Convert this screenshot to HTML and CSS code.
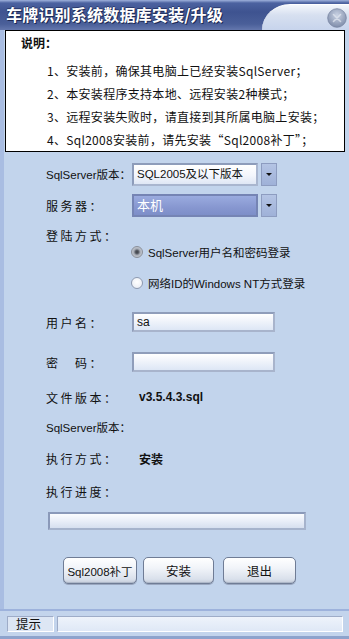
FILE: index.html
```html
<!DOCTYPE html>
<html lang="zh-CN">
<head>
<meta charset="utf-8">
<title>车牌识别系统数据库安装/升级</title>
<link rel="stylesheet" href="styles.css">
</head>
<body>
<div class="window">
  <div class="titlebar">
    <span class="title">车牌识别系统数据库安装/升级</span>
    <svg class="close" width="20" height="20" viewBox="0 0 20 20">
      <defs>
        <radialGradient id="cg" cx="50%" cy="35%" r="65%">
          <stop offset="0" stop-color="#c9d2e3"/>
          <stop offset="1" stop-color="#7f8daa"/>
        </radialGradient>
      </defs>
      <circle cx="10" cy="10" r="9.3" fill="url(#cg)" stroke="#7a87a3" stroke-width="0.8"/>
      <path d="M6.5 6.5 L13.5 13.5 M13.5 6.5 L6.5 13.5" stroke="#e4e9f2" stroke-width="1.6" stroke-linecap="round" opacity="0.7"/>
    </svg>
  </div>
  <div class="main">
    <div class="notes">
      <div class="notes-title">说明：</div>
      <p>1、安装前，确保其电脑上已经安装SqlServer；</p>
      <p>2、本安装程序支持本地、远程安装2种模式；</p>
      <p>3、远程安装失败时，请直接到其所属电脑上安装；</p>
      <p>4、Sql2008安装前，请先安装“Sql2008补丁”；</p>
    </div>
    <div class="form">
      <div class="row row-combo1">
        <span class="label latin">SqlServer版本：</span>
        <div class="combo">
          <div class="combo-field">SQL2005及以下版本</div>
          <div class="combo-btn"><span class="arrow"></span></div>
        </div>
      </div>
      <div class="row row-combo2">
        <span class="label">服务器：</span>
        <div class="combo">
          <div class="combo-field selected">本机</div>
          <div class="combo-btn"><span class="arrow"></span></div>
        </div>
      </div>
      <div class="row row-login">
        <span class="label">登陆方式：</span>
      </div>
      <div class="row row-radio1">
        <span class="radio checked"></span><span class="radio-text">SqlServer用户名和密码登录</span>
      </div>
      <div class="row row-radio2">
        <span class="radio"></span><span class="radio-text">网络ID的Windows NT方式登录</span>
      </div>
      <div class="row row-user">
        <span class="label">用户名：</span>
        <div class="input">sa</div>
      </div>
      <div class="row row-pwd">
        <span class="label">密　码：</span>
        <div class="input"></div>
      </div>
      <div class="row row-file">
        <span class="label">文件版本：</span>
        <span class="value latin-bold">v3.5.4.3.sql</span>
      </div>
      <div class="row row-sqlver">
        <span class="label latin">SqlServer版本：</span>
      </div>
      <div class="row row-exec">
        <span class="label">执行方式：</span>
        <span class="value bold">安装</span>
      </div>
      <div class="row row-prog">
        <span class="label">执行进度：</span>
      </div>
    </div>
    <div class="progress"></div>
    <div class="buttons">
      <div class="btn btn-patch">Sql2008补丁</div>
      <div class="btn btn-install">安装</div>
      <div class="btn btn-exit">退出</div>
    </div>
    <div class="statusbar">
      <div class="status-label">提示</div>
      <div class="status-text"></div>
    </div>
  </div>
</div>
</body>
</html>
```
FILE: styles.css
```css
html, body {
  margin: 0;
  padding: 0;
  background: #c2d4ec;
}
.window {
  width: 349px;
  height: 639px;
  overflow: hidden;
  font-family: "Noto Sans CJK SC", "Liberation Sans", sans-serif;
  font-size: 12px;
  color: #111;
  background: #c2d4ec;
  position: relative;
}
.titlebar {
  height: 30px;
  position: relative;
  background: linear-gradient(#9fb2dc 0, #4c62a0 3px, #3e5390 12px, #4a5f99 24px, #6477ad 30px);
  display: flex;
  align-items: center;
}
.titlebar::after {
  content: "";
  position: absolute;
  left: 262px;
  right: 0;
  top: 4px;
  bottom: 0;
  border-top-left-radius: 28px 26px;
  background: linear-gradient(#f4f7fc, #d7e0f0 40%, #c7d4ec);
  border-top: 1px solid #ffffff;
}
.title {
  margin-left: 6px;
  margin-top: -2px;
  font-size: 16px;
  font-weight: bold;
  color: #ffffff;
  letter-spacing: 0.2px;
  text-shadow: 1px 1px 0 #1d2a55, -1px 0 0 #2a3a6e, 0 -1px 0 #2a3a6e;
  position: relative;
  z-index: 1;
}
.close {
  position: absolute;
  left: 327px;
  top: 8px;
  z-index: 2;
}
.main {
  border-left: 4px solid #a9bde2;
  height: 609px;
  box-sizing: border-box;
  display: flex;
  flex-direction: column;
}
.notes {
  margin-left: 1px;
  width: 340px;
  height: 122px;
  box-sizing: border-box;
  background: #ffffff;
  border: 1px solid #000000;
  padding-top: 3px;
}
.notes-title {
  height: 18px;
  line-height: 18px;
  margin-left: 15px;
  font-weight: bold;
  font-size: 12px;
  margin-bottom: 7px;
}
.notes p {
  margin: 0 0 0 41px;
  height: 23px;
  line-height: 23px;
  font-size: 12px;
  letter-spacing: 0.3px;
  white-space: nowrap;
}
.form {
  padding-left: 42px;
  display: flex;
  flex-direction: column;
}
.row {
  display: flex;
  align-items: center;
  height: 16px;
}
.label {
  width: 86px;
  flex: none;
  letter-spacing: 2.5px;
  font-size: 12px;
  white-space: nowrap;
}
.label.latin {
  letter-spacing: 0;
  font-family: "Liberation Sans", "Noto Sans CJK SC", sans-serif;
  font-size: 11.5px;
}
.row-combo1 { margin-top: 10px; height: 24px; }
.row-combo2 { margin-top: 7px; height: 24px; }
.row-login { margin-top: 10px; }
.row-radio1 { margin-top: 1px; padding-left: 85px; }
.row-radio2 { margin-top: 15px; padding-left: 85px; }
.row-user { margin-top: 21px; height: 20px; }
.row-pwd { margin-top: 20px; height: 20px; }
.row-file { margin-top: 17px; }
.row-sqlver { margin-top: 14px; }
.row-exec { margin-top: 15px; }
.row-prog { margin-top: 17px; }

.combo {
  display: flex;
  height: 23px;
}
.combo-field {
  width: 126px;
  box-sizing: border-box;
  border: 2px solid #8d9cba;
  border-right-color: #a9b6cf;
  border-bottom-color: #a9b6cf;
  background: linear-gradient(#ffffff, #f3f6fc 55%, #dfe7f5);
  font-family: "Liberation Sans", "Noto Sans CJK SC", sans-serif;
  font-size: 11.5px;
  line-height: 18px;
  padding-left: 3px;
  white-space: nowrap;
  overflow: hidden;
}
.combo-field.selected {
  background: linear-gradient(#9aabdf, #8797d0 60%, #7d8ec8);
  border-color: #7584b4;
  color: #ffffff;
  font-family: "Noto Sans CJK SC", sans-serif;
  font-size: 13px;
}
.combo-btn {
  margin-left: 3px;
  width: 16px;
  box-sizing: border-box;
  border: 1px solid #8d9cc0;
  background: linear-gradient(#b4c4e4, #9fb1d8);
  display: flex;
  align-items: center;
  justify-content: center;
}
.arrow {
  width: 0;
  height: 0;
  border-left: 3px solid transparent;
  border-right: 3px solid transparent;
  border-top: 3px solid #111;
  margin-top: 1px;
}
.radio {
  width: 12px;
  height: 12px;
  box-sizing: border-box;
  border-radius: 50%;
  border: 1px solid #8e9ab0;
  background: radial-gradient(circle at 50% 40%, #ffffff, #e4e9f2);
  flex: none;
}
.radio.checked {
  border-color: #8a8f99;
  background: radial-gradient(circle at 50% 50%, #3a3d44 0, #5c6068 25%, #a7acb6 45%, #c7ccd4 75%, #9aa0aa 100%);
}
.radio-text {
  margin-left: 5px;
  font-family: "Liberation Sans", "Noto Sans CJK SC", sans-serif;
  font-size: 11.5px;
  white-space: nowrap;
}
.input {
  width: 143px;
  height: 20px;
  box-sizing: border-box;
  border: 2px solid #8f9dba;
  border-right-color: #a8b4cc;
  border-bottom-color: #a8b4cc;
  background: linear-gradient(#ffffff, #eef2fa 50%, #dde6f5);
  font-family: "Liberation Sans", sans-serif;
  font-size: 12px;
  line-height: 16px;
  padding-left: 3px;
}
.value {
  margin-left: 7px;
  font-size: 12px;
}
.latin-bold {
  font-family: "Liberation Sans", sans-serif;
  font-weight: bold;
  font-size: 12px;
}
.bold {
  font-weight: bold;
}
.progress {
  margin-top: 13px;
  margin-left: 44px;
  width: 258px;
  height: 18px;
  box-sizing: border-box;
  border: 2px solid #8a99b9;
  border-right-color: #a6b3cc;
  border-bottom-color: #a6b3cc;
  background: linear-gradient(#fbfcfe, #e9eef8 50%, #d6dfef);
}
.buttons {
  margin-top: 27px;
  padding-left: 59px;
  display: flex;
  height: 27px;
}
.btn {
  box-sizing: border-box;
  height: 27px;
  border: 1px solid #6f7c95;
  border-radius: 5px;
  background: linear-gradient(#ffffff, #f1f4f9 40%, #d9e0eb 85%, #c3cbd9);
  box-shadow: inset 0 -1px 0 #aeb8c9, 0 1px 0 #9aa7bf;
  display: flex;
  align-items: center;
  justify-content: center;
  font-size: 12.5px;
  white-space: nowrap;
}
.btn-patch {
  width: 74px;
  font-family: "Liberation Sans", "Noto Sans CJK SC", sans-serif;
  font-size: 11.5px;
}
.btn-install { width: 71px; margin-left: 6px; }
.btn-exit { width: 73px; margin-left: 9px; }
.statusbar {
  margin-top: auto;
  margin-left: -4px;
  height: 30px;
  box-sizing: border-box;
  border-top: 2px solid #9db2dc;
  border-bottom: 3px solid #8ea3cc;
  background: #c3d4ec;
  display: flex;
  align-items: center;
  padding-left: 7px;
  gap: 3px;
}
.status-label {
  width: 47px;
  height: 16px;
  box-sizing: border-box;
  border: 1px solid #ffffff;
  border-top-color: #9eacc8;
  border-left-color: #9eacc8;
  background: #dde6f4;
  font-size: 12.5px;
  line-height: 14px;
  padding-left: 8px;
}
.status-text {
  width: 286px;
  height: 16px;
  box-sizing: border-box;
  border: 1px solid #ffffff;
  border-top-color: #9eacc8;
  border-left-color: #9eacc8;
  background: linear-gradient(#eef3fb, #dfe8f6);
}
```
